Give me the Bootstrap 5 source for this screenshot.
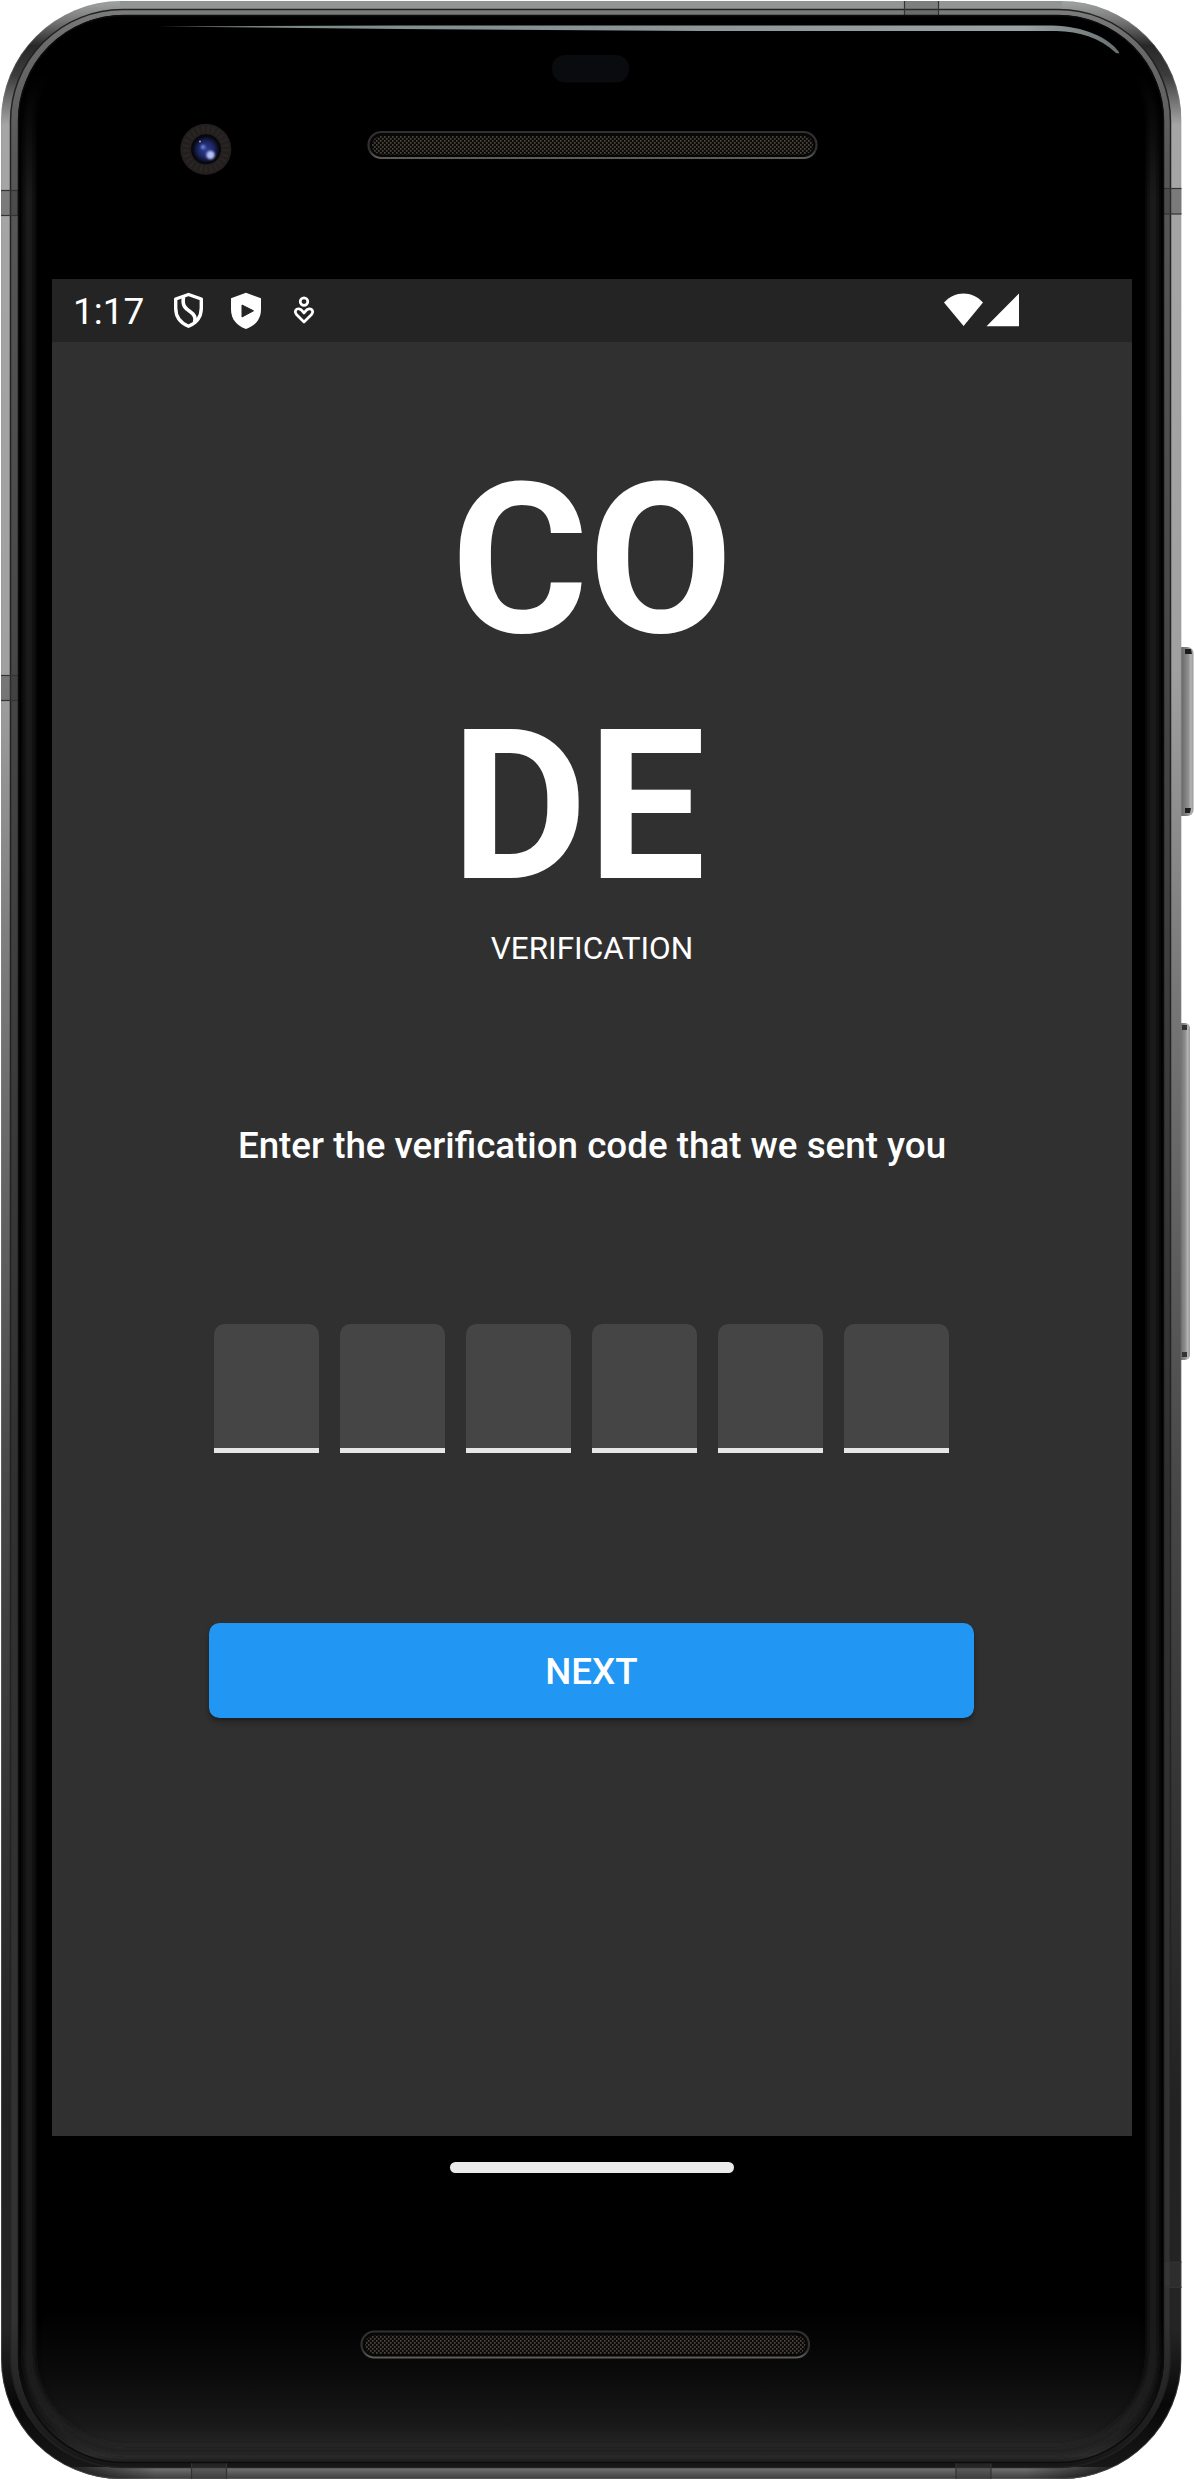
<!DOCTYPE html>
<html lang="en">
<head>
<meta charset="utf-8">
<meta name="viewport" content="width=device-width, initial-scale=1">
<title>Code verification</title>
<link href="https://cdn.jsdelivr.net/npm/bootstrap@5.3.0/dist/css/bootstrap.min.css" rel="stylesheet">
<style>
  body { font-family: Roboto, "Liberation Sans", sans-serif; background: #fff; overflow-x: hidden; }
  .device { width: 1194px; height: 2480px; padding: 279px 62px 0 52px; }
  .device-art { width: 1194px; height: 2480px; z-index: 0; }
  .screen { width: 1080px; height: 1857px; background: #303030; z-index: 1; }
  .status-bar { height: 63px; background: #242424; padding: 0 113px 0 21px; }
  .clock { font-size: 37px; line-height: 43px; width: 101px; padding-top: 2px; }
  .status-bar svg { display: block; }
  .title-code { font-size: 210px; line-height: 246px; font-weight: 700; margin: 95px 0 0; }
  .subtitle { font-size: 31.5px; line-height: 37px; margin: 1px 0 0; }
  .prompt { font-size: 36.75px; line-height: 43px; font-weight: 500; margin: 157px 0 0; }
  .cells { gap: 21px; margin: 157px 0 0 162px; }
  .code-cell, .code-cell:focus { width: 105px; height: 129px; padding: 0; border: 0; border-bottom: 5px solid #e6e6e6; border-radius: 10.5px 10.5px 0 0; background: #454545; color: #fff; font-size: 52px; box-shadow: none; }
  .btn-next { width: 765px; height: 95px; margin: 170px 0 0 157px; border: 0; border-radius: 10.5px; font-size: 36.75px; font-weight: 500; line-height: 43px; padding: 2px 0 0; color: #fff; background: #2196f3; box-shadow: 0 5px 6px rgba(0,0,0,.2), 0 2px 3px rgba(0,0,0,.2); }
  .btn-next:hover { background: #2196f3; color: #fff; }
  .home-bar { width: 284px; height: 11px; border-radius: 5.5px; background: #ebebeb; margin: 26px 0 0 398px; z-index: 1; }
</style>
</head>
<body>
<main class="device position-relative">
  <svg class="device-art position-absolute top-0 start-0" viewBox="0 0 1194 2480" aria-hidden="true">
    <defs>
      <linearGradient id="rim" x1="0" y1="0" x2="0" y2="1">
        <stop offset="0" stop-color="#a2a5a4"/><stop offset=".008" stop-color="#777"/><stop offset=".018" stop-color="#282828"/><stop offset=".03" stop-color="#3c3c3c"/><stop offset=".05" stop-color="#a5a5a5"/>
        <stop offset=".27" stop-color="#a0a0a0"/><stop offset=".4" stop-color="#777"/><stop offset=".6" stop-color="#474747"/><stop offset=".85" stop-color="#222"/><stop offset=".94" stop-color="#242424"/><stop offset=".97" stop-color="#080808"/><stop offset="1" stop-color="#1a1a1a"/>
      </linearGradient>
      <linearGradient id="rimInner" x1="0" y1="0" x2="0" y2="1">
        <stop offset="0" stop-color="#7c7c7c"/><stop offset=".015" stop-color="#6a6a6a"/><stop offset=".06" stop-color="#585858"/><stop offset=".3" stop-color="#444"/><stop offset=".6" stop-color="#303030"/><stop offset=".94" stop-color="#323232"/><stop offset="1" stop-color="#161616"/>
      </linearGradient>
      <linearGradient id="foot" x1="0" y1="0" x2="1" y2="0">
        <stop offset="0" stop-color="#777" stop-opacity="0"/><stop offset=".09" stop-color="#777"/><stop offset=".91" stop-color="#777"/><stop offset="1" stop-color="#777" stop-opacity="0"/>
      </linearGradient>
      <linearGradient id="footShade" x1="0" y1="0" x2="0" y2="1">
        <stop offset="0" stop-color="#000" stop-opacity="0"/><stop offset="1" stop-color="#000" stop-opacity=".5"/>
      </linearGradient>
      <linearGradient id="chin" x1="0" y1="0" x2="0" y2="1">
        <stop offset="0" stop-color="#000"/><stop offset=".4" stop-color="#0a0a0a"/><stop offset=".76" stop-color="#191919"/><stop offset=".86" stop-color="#232323"/><stop offset=".95" stop-color="#2e2e2e"/><stop offset="1" stop-color="#1d1d1d"/>
      </linearGradient>
      <linearGradient id="fadeTop" x1="0" y1="0" x2="0" y2="1">
        <stop offset=".03" stop-color="#000"/><stop offset=".08" stop-color="#fff"/>
      </linearGradient>
      <linearGradient id="shine" x1="0" y1="0" x2="1" y2="0">
        <stop offset="0" stop-color="#5c6666"/><stop offset=".15" stop-color="#7f8a8a"/><stop offset=".9" stop-color="#9aa3a4"/><stop offset="1" stop-color="#697072"/>
      </linearGradient>
      <linearGradient id="key" x1="0" y1="0" x2="1" y2="0">
        <stop offset="0" stop-color="#7c7c7c"/><stop offset=".35" stop-color="#6c6c6c"/><stop offset=".7" stop-color="#8e8e8e"/><stop offset=".85" stop-color="#b4b4b4"/><stop offset="1" stop-color="#999"/>
      </linearGradient>
      <linearGradient id="ring" x1="0" y1="0" x2="0" y2="1">
        <stop offset="0" stop-color="#303030"/><stop offset=".7" stop-color="#303030"/><stop offset="1" stop-color="#5e5c56"/>
      </linearGradient>
      <radialGradient id="lens" cx=".5" cy=".5" r=".5">
        <stop offset="0" stop-color="#2f3f93"/><stop offset=".6" stop-color="#1c2763"/><stop offset="1" stop-color="#080a18"/>
      </radialGradient>
      <pattern id="mesh" width="4" height="4" patternUnits="userSpaceOnUse">
        <rect width="4" height="4" fill="#0b0a09"/><rect width="1.6" height="1.8" fill="#4a453d"/><rect x="2" y="2" width="1.6" height="1.8" fill="#4a453d"/>
      </pattern>
      <filter id="soft" x="-5%" y="-5%" width="110%" height="110%"><feGaussianBlur stdDeviation="3"/></filter>
      <filter id="tiny" x="-50%" y="-50%" width="200%" height="200%"><feGaussianBlur stdDeviation="1.3"/></filter>
      <mask id="sideMask" maskUnits="userSpaceOnUse" x="0" y="0" width="1194" height="2480"><rect width="1194" height="2480" fill="url(#fadeTop)"/></mask>
      <clipPath id="bodyClip"><rect x="1" y="1" width="1180.500" height="2478" rx="120"/></clipPath>
      <clipPath id="glassClip"><rect x="18" y="15" width="1146" height="2448" rx="106"/></clipPath>
    </defs>

    <!-- side keys -->
    <rect x="1176" y="647" width="17.500" height="169" rx="6" fill="url(#key)"/>
    <path d="M1185 649h6l1 5h-7zM1185 808h6l-1 5h-5z" fill="#1c1c1c"/>
    <rect x="1174" y="1023" width="16" height="337" rx="5" fill="url(#key)"/>
    <path d="M1182 1025h5v5h-5zM1182 1352h5v5h-5z" fill="#333"/>

    <!-- metal rim -->
    <g clip-path="url(#bodyClip)">
      <rect x="1" y="1" width="1180.500" height="2478" fill="url(#rim)"/>
      <rect x="120" y="1" width="942" height="9" fill="#939594"/>
      <rect x="60" y="2467" width="1062" height="12" fill="url(#foot)"/>
      <rect x="60" y="2467" width="1062" height="12" fill="url(#footShade)"/>
      <rect x="10.500" y="9.500" width="1160" height="2458" rx="112" fill="url(#rimInner)" stroke="#222" stroke-width="1.500"/>
      <rect x="1.500" y="1.500" width="1179.500" height="2477" rx="119.500" fill="none" stroke="#8c9090" stroke-opacity=".3"/>
      <g fill="#3c3c3c" fill-opacity=".4" stroke="#333" stroke-width="1.200">
        <rect x="0" y="190.500" width="18" height="25"/><rect x="0" y="675.500" width="19" height="25"/>
        <rect x="1163" y="188.500" width="20" height="25.500"/><rect x="1163" y="2262" width="20" height="25.500"/>
        <rect x="904.500" y="0" width="34" height="16" fill-opacity=".25"/>
        <rect x="191.500" y="2462" width="35" height="18"/><rect x="956" y="2462" width="35" height="18"/>
      </g>
    </g>

    <!-- front glass -->
    <rect x="18" y="15" width="1146" height="2448" rx="106" fill="#000"/>
    <g clip-path="url(#glassClip)">
      <rect x="18" y="2310" width="1146" height="153" fill="url(#chin)"/>
      <g mask="url(#sideMask)">
        <rect x="29" y="25" width="1124" height="2426" rx="98" fill="none" stroke="#242424" stroke-width="9" filter="url(#soft)"/>
      </g>
    </g>
    <rect x="18.500" y="15.500" width="1145" height="2447" rx="105.500" fill="none" stroke="#0c0c0e" stroke-width="1.500"/>
    <path d="M158 26.500L400 25.500H1052C1084 26 1109 38 1119 52Q1119.500 54 1116 53C1100 38 1080 31.500 1056 31H700L400 29Z" fill="url(#shine)"/>

    <!-- sensor, camera and speakers -->
    <rect x="552" y="55" width="77" height="27.500" rx="13" fill="#0a0b0f"/>
    <circle cx="205.800" cy="149.300" r="25.500" fill="#231f1f"/>
    <circle cx="205.800" cy="149.300" r="20" fill="none" stroke="#2a2625" stroke-width="7" stroke-dasharray="2 3"/>
    <circle cx="206" cy="149.300" r="15" fill="#07070c"/>
    <circle cx="206" cy="149.500" r="13" fill="url(#lens)"/>
    <circle cx="210.500" cy="155" r="4.200" fill="#b4c0f5" filter="url(#tiny)"/>
    <circle cx="203" cy="147" r="2.200" fill="#7189e0" filter="url(#tiny)"/>
    <circle cx="200" cy="141.500" r="1" fill="#9aa7d8"/>
    <rect x="368.500" y="132" width="448" height="26" rx="13" fill="#070707" stroke="url(#ring)" stroke-width="2.200"/>
    <rect x="372" y="136" width="441" height="18.500" rx="9" fill="url(#mesh)"/>
    <rect x="361.500" y="2331.500" width="447.500" height="26" rx="13" fill="#070707" stroke="url(#ring)" stroke-width="2.200"/>
    <rect x="365" y="2335.500" width="440.500" height="18.500" rx="9" fill="url(#mesh)"/>
  </svg>

  <section class="screen position-relative text-white overflow-hidden">
    <header class="status-bar d-flex align-items-center justify-content-between">
      <div class="d-flex align-items-center">
        <span class="clock">1:17</span>
        <svg width="140" height="37" viewBox="174 292 140 37" fill="none" stroke="#fff" overflow="visible">
          <path d="M188.500 294.500L201.300 299V308C201.300 317 196.500 323 188.500 326.300C180.500 323 175.700 317 175.700 308V299Z" stroke-width="3.400" stroke-linejoin="round"/>
          <path d="M183.500 297C182 306 185.500 308.500 190 311.500C194.500 314.500 196.500 317.500 194.500 322.500" stroke-width="3.600"/>
          <path d="M246 292.700L261 298.300V309C261 319.500 255 326 246 329C237 326 231 319.500 231 309V298.300Z" fill="#fff" stroke="none"/>
          <path d="M242 305L253.500 310.800L242 317Z" fill="#242424" stroke="#242424" stroke-linejoin="round"/>
          <circle cx="304" cy="301.600" r="3.800" stroke-width="2.700"/>
          <path d="M304 322L296.700 314.800C293.800 311.500 296 308.500 299 308.800C301.500 309 302.500 311 304 313C305.500 311 306.500 309 309 308.800C312 308.500 314.200 311.500 311.300 314.800Z" stroke-width="2.700" stroke-linejoin="round"/>
        </svg>
      </div>
      <svg width="75" height="37" viewBox="944 291.500 75 37" fill="#fff">
        <path d="M944 302C955 290 972 290 983 302L963.600 325.500Z"/>
        <path d="M986.500 325.800L1019 293V325.800Z"/>
      </svg>
    </header>

    <div class="d-flex flex-column align-items-center">
      <h1 class="title-code">CO<br>DE</h1>
      <p class="subtitle">VERIFICATION</p>
      <p class="prompt text-nowrap">Enter the verification code that we sent you</p>
    </div>
    <form>
      <div class="cells d-flex">
        <input class="code-cell form-control text-center" maxlength="1" aria-label="Digit 1">
        <input class="code-cell form-control text-center" maxlength="1" aria-label="Digit 2">
        <input class="code-cell form-control text-center" maxlength="1" aria-label="Digit 3">
        <input class="code-cell form-control text-center" maxlength="1" aria-label="Digit 4">
        <input class="code-cell form-control text-center" maxlength="1" aria-label="Digit 5">
        <input class="code-cell form-control text-center" maxlength="1" aria-label="Digit 6">
      </div>
      <button type="button" class="btn btn-next">NEXT</button>
    </form>
  </section>
  <div class="home-bar position-relative"></div>
</main>
<script src="https://cdn.jsdelivr.net/npm/bootstrap@5.3.0/dist/js/bootstrap.bundle.min.js"></script>
</body>
</html>
